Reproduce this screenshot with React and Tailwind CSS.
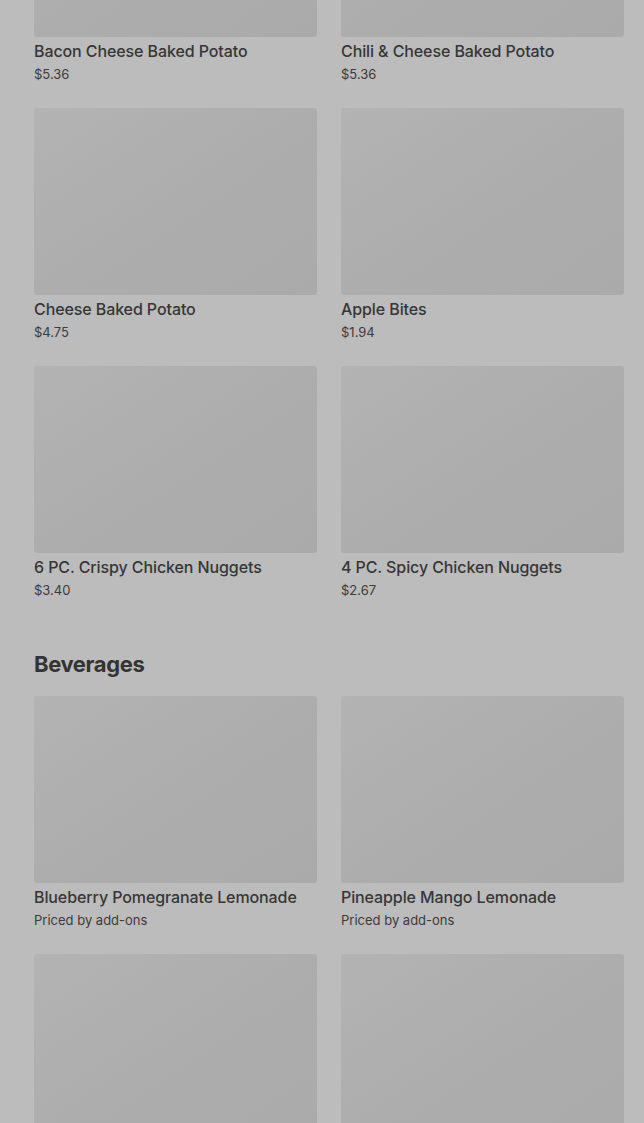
import React from "react";

const rows1 = [
  [
    { t: "Bacon Cheese Baked Potato", p: "$5.36" },
    { t: "Chili & Cheese Baked Potato", p: "$5.36" },
  ],
  [
    { t: "Cheese Baked Potato", p: "$4.75" },
    { t: "Apple Bites", p: "$1.94" },
  ],
  [
    { t: "6 PC. Crispy Chicken Nuggets", p: "$3.40" },
    { t: "4 PC. Spicy Chicken Nuggets", p: "$2.67" },
  ],
];

const rows2 = [
  [
    { t: "Blueberry Pomegranate Lemonade", p: "Priced by add-ons" },
    { t: "Pineapple Mango Lemonade", p: "Priced by add-ons" },
  ],
  [
    { t: "", p: "" },
    { t: "", p: "" },
  ],
];

function Card({ t, p }) {
  return (
    <div className="flex flex-col">
      <div className="h-[187px] rounded-[3px] bg-gradient-to-br from-[#b3b3b3] via-[#adadad] to-[#aaaaaa]" />
      {t && (
        <div className="mt-[4px] text-[16px] leading-[20px] font-medium text-[#363636] tracking-[-0.1px]">
          {t}
        </div>
      )}
      {p && (
        <div className="mt-[4px] text-[13px] leading-[18px] text-[#3b3b3b]">{p}</div>
      )}
    </div>
  );
}

export default function App() {
  return (
    <div
      className="h-[1123px] w-[644px] overflow-hidden bg-[#bcbcbc]"
      style={{ fontFamily: "Inter, 'Noto Sans', sans-serif" }}
    >
      <div className="mt-[-150px] pl-[34px] pr-[20px]">
        <div className="flex flex-col gap-[26px]">
          {rows1.map((r, i) => (
            <div key={i} className="grid grid-cols-2 gap-x-[24px] h-[232px]">
              {r.map((c, j) => (
                <Card key={j} {...c} />
              ))}
            </div>
          ))}
        </div>
        <h2 className="mt-[52px] text-[22px] leading-[28px] font-bold text-[#333333] tracking-[-0.4px]">
          Beverages
        </h2>
        <div className="mt-[18px] flex flex-col gap-[26px]">
          {rows2.map((r, i) => (
            <div key={i} className="grid grid-cols-2 gap-x-[24px] h-[232px]">
              {r.map((c, j) => (
                <Card key={j} {...c} />
              ))}
            </div>
          ))}
        </div>
      </div>
    </div>
  );
}
